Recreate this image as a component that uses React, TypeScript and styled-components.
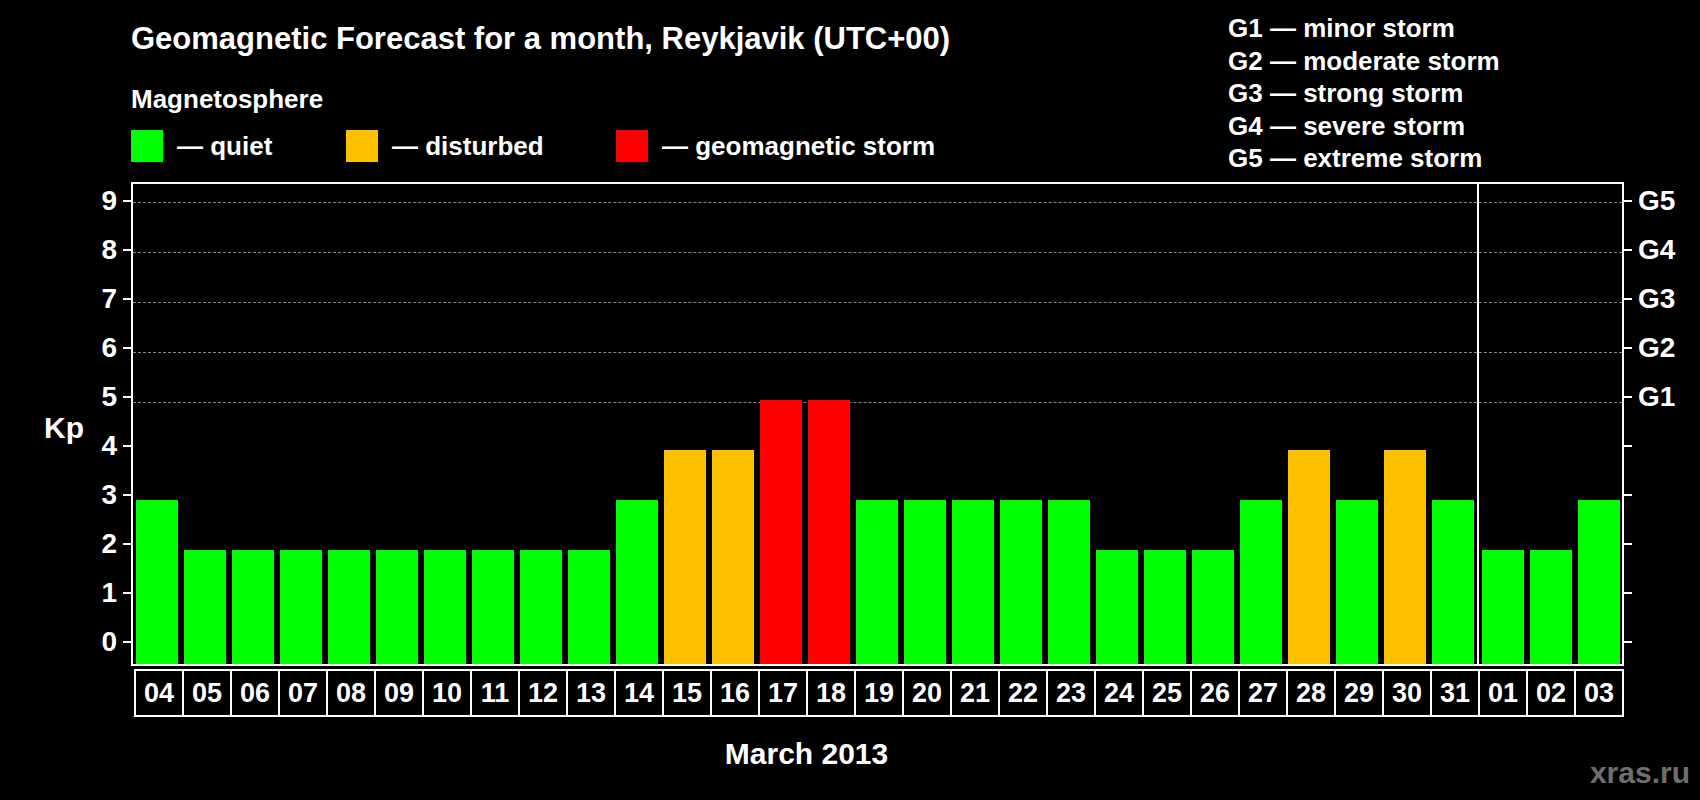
import styled, { createGlobalStyle } from "styled-components";

const GlobalStyle = createGlobalStyle`
  html, body { margin: 0; padding: 0; background: #000; }
  body { font-family: "Liberation Sans", Arial, sans-serif; color: #fff; font-weight: bold; }
`;

const Page = styled.div`
  width: 1700px;
  height: 800px;
  background: #000;
  position: relative;
  overflow: hidden;
`;

const Header = styled.div`
  display: flex;
  justify-content: space-between;
  padding: 18px 0 0 131px;
  height: 182px;
  box-sizing: border-box;
`;

const HeadLeft = styled.div`
  display: flex;
  flex-direction: column;
`;

const Title = styled.div`
  font-size: 31px;
  line-height: 34px;
  margin-top: 4px;
`;

const Sub = styled.div`
  font-size: 26px;
  line-height: 30px;
  margin-top: 28px;
`;

const Legend = styled.div`
  display: flex;
  align-items: center;
  margin-top: 16px;
`;

const LegendItem = styled.div<{ $w: number }>`
  display: flex;
  align-items: center;
  width: ${(p) => p.$w}px;
  font-size: 26px;
  gap: 14px;
`;

const Swatch = styled.span<{ $c: string }>`
  width: 32px;
  height: 32px;
  background: ${(p) => p.$c};
`;

const Scale = styled.div`
  width: 472px;
  display: flex;
  flex-direction: column;
  font-size: 26px;
  line-height: 32.5px;
  margin-top: -6px;
`;

const ChartRow = styled.div`
  display: flex;
  height: 484px;
`;

const KpLabel = styled.div`
  width: 88px;
  font-size: 30px;
  display: flex;
  align-items: center;
  justify-content: flex-end;
  padding-right: 4px;
  padding-top: 8px;
  box-sizing: border-box;
`;

const AxisCol = styled.div<{ $side: "l" | "r" }>`
  width: ${(p) => (p.$side === "l" ? 43 : 76)}px;
  margin-top: -5px;
  display: flex;
  flex-direction: column;
`;

const Tick = styled.div<{ $side: "l" | "r" }>`
  height: 50px;
  display: flex;
  align-items: center;
  flex-direction: ${(p) => (p.$side === "l" ? "row" : "row-reverse")};
  justify-content: flex-end;
  gap: 6px;
  font-size: 28px;
  &::after {
    content: "";
    width: 8px;
    height: 2px;
    background: #fff;
  }
`;

const Plot = styled.div`
  width: 1493px;
  border: 2px solid #fff;
  box-sizing: border-box;
  position: relative;
  display: flex;
  align-items: flex-end;
`;

const GridLine = styled.div`
  position: absolute;
  left: 0;
  right: 0;
  border-top: 1px dashed #888;
`;

const Group = styled.div<{ $sep?: boolean }>`
  display: flex;
  align-items: flex-end;
  gap: 6px;
  height: 100%;
  padding: 0 3px;
  border-right: ${(p) => (p.$sep ? "2px solid #fff" : "none")};
`;

const Bar = styled.div<{ $c: string }>`
  width: 42px;
  background: ${(p) => p.$c};
  position: relative;
  z-index: 1;
`;

const Dates = styled.div`
  display: flex;
  margin: 3px 0 0 134px;
  border-top: 2px solid #fff;
  border-bottom: 2px solid #fff;
  border-left: 2px solid #fff;
  width: max-content;
`;

const DateCell = styled.div`
  width: 46px;
  height: 44px;
  border-right: 2px solid #fff;
  display: flex;
  align-items: center;
  justify-content: center;
  font-size: 27px;
`;

const Caption = styled.div`
  width: 1613px;
  text-align: center;
  font-size: 30px;
  margin-top: 20px;
`;

const Mark = styled.div`
  position: absolute;
  right: 10px;
  bottom: 10px;
  color: #6e6e6e;
  font-size: 30px;
`;

const data: [string, number][] = [
  ["04", 3], ["05", 2], ["06", 2], ["07", 2], ["08", 2], ["09", 2], ["10", 2], ["11", 2],
  ["12", 2], ["13", 2], ["14", 3], ["15", 4], ["16", 4], ["17", 5], ["18", 5], ["19", 3],
  ["20", 3], ["21", 3], ["22", 3], ["23", 3], ["24", 2], ["25", 2], ["26", 2], ["27", 3],
  ["28", 4], ["29", 3], ["30", 4], ["31", 3], ["01", 2], ["02", 2], ["03", 3],
];

const color = (v: number) => (v >= 5 ? "#ff0000" : v === 4 ? "#ffc000" : "#00ff00");
const barH = (v: number) => 14 + v * 50;

const levels = [9, 8, 7, 6, 5, 4, 3, 2, 1, 0];

const App = () => (
  <Page>
    <GlobalStyle />
    <Header>
      <HeadLeft>
        <Title>Geomagnetic Forecast for a month, Reykjavik (UTC+00)</Title>
        <Sub>Magnetosphere</Sub>
        <Legend>
          <LegendItem $w={215}><Swatch $c="#00ff00" />— quiet</LegendItem>
          <LegendItem $w={270}><Swatch $c="#ffc000" />— disturbed</LegendItem>
          <LegendItem $w={340}><Swatch $c="#ff0000" />— geomagnetic storm</LegendItem>
        </Legend>
      </HeadLeft>
      <Scale>
        <div>G1 — minor storm</div>
        <div>G2 — moderate storm</div>
        <div>G3 — strong storm</div>
        <div>G4 — severe storm</div>
        <div>G5 — extreme storm</div>
      </Scale>
    </Header>
    <ChartRow>
      <KpLabel>Kp</KpLabel>
      <AxisCol $side="l">
        {levels.map((l) => <Tick key={l} $side="l">{l}</Tick>)}
      </AxisCol>
      <Plot>
        {[9, 8, 7, 6, 5].map((l) => (
          <GridLine key={l} style={{ top: 18 + (9 - l) * 50 }} />
        ))}
        <Group $sep>
          {data.slice(0, 28).map(([d, v]) => <Bar key={d} $c={color(v)} style={{ height: barH(v) }} />)}
        </Group>
        <Group>
          {data.slice(28).map(([d, v]) => <Bar key={d} $c={color(v)} style={{ height: barH(v) }} />)}
        </Group>
      </Plot>
      <AxisCol $side="r">
        {levels.map((l) => <Tick key={l} $side="r">{l >= 5 ? `G${l - 4}` : ""}</Tick>)}
      </AxisCol>
    </ChartRow>
    <Dates>
      {data.map(([d]) => <DateCell key={d}>{d}</DateCell>)}
    </Dates>
    <Caption>March 2013</Caption>
    <Mark>xras.ru</Mark>
  </Page>
);

export default App;
